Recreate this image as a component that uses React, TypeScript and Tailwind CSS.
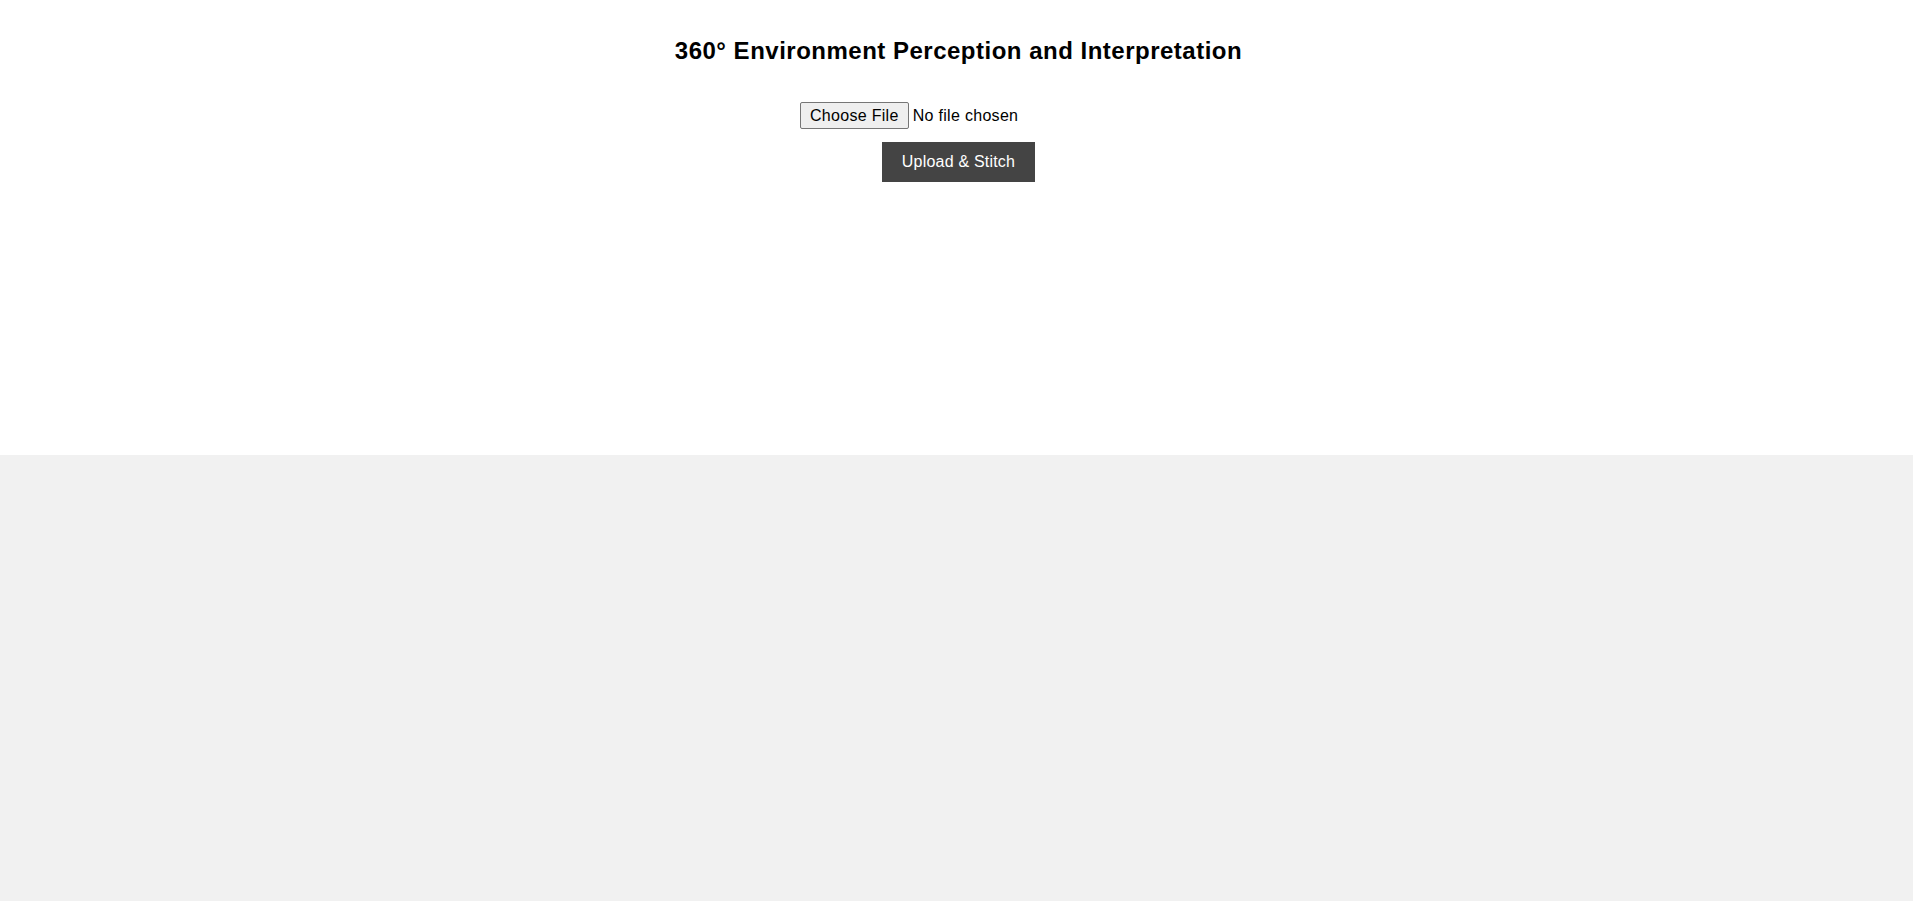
export default function App() {
  return (
    <div className="min-h-screen bg-[#f1f1f1] font-['Liberation_Sans',Arial,sans-serif] text-black">
      {/* Upload panel */}
      <div className="flex h-[455px] flex-col items-center bg-white pt-[37px] pl-[4px]">
        <h2 className="text-[24px] leading-[28px] font-bold tracking-[0.5px]">
          360° Environment Perception and Interpretation
        </h2>

        <input
          type="file"
          className="mt-[37px] h-[27px] w-[317px] text-[16px] leading-[19px] tracking-[0.3px] file:mr-[4px] file:h-[27px] file:rounded-[2px] file:border file:border-[#767676] file:bg-[#efefef] file:px-[9px] file:py-[3px] file:text-black"
        />

        <button
          type="button"
          className="mt-[13px] h-[40px] bg-[#444444] px-5 text-[16px] leading-[20px] tracking-[0.2px] text-white"
        >
          Upload &amp; Stitch
        </button>
      </div>
    </div>
  );
}
